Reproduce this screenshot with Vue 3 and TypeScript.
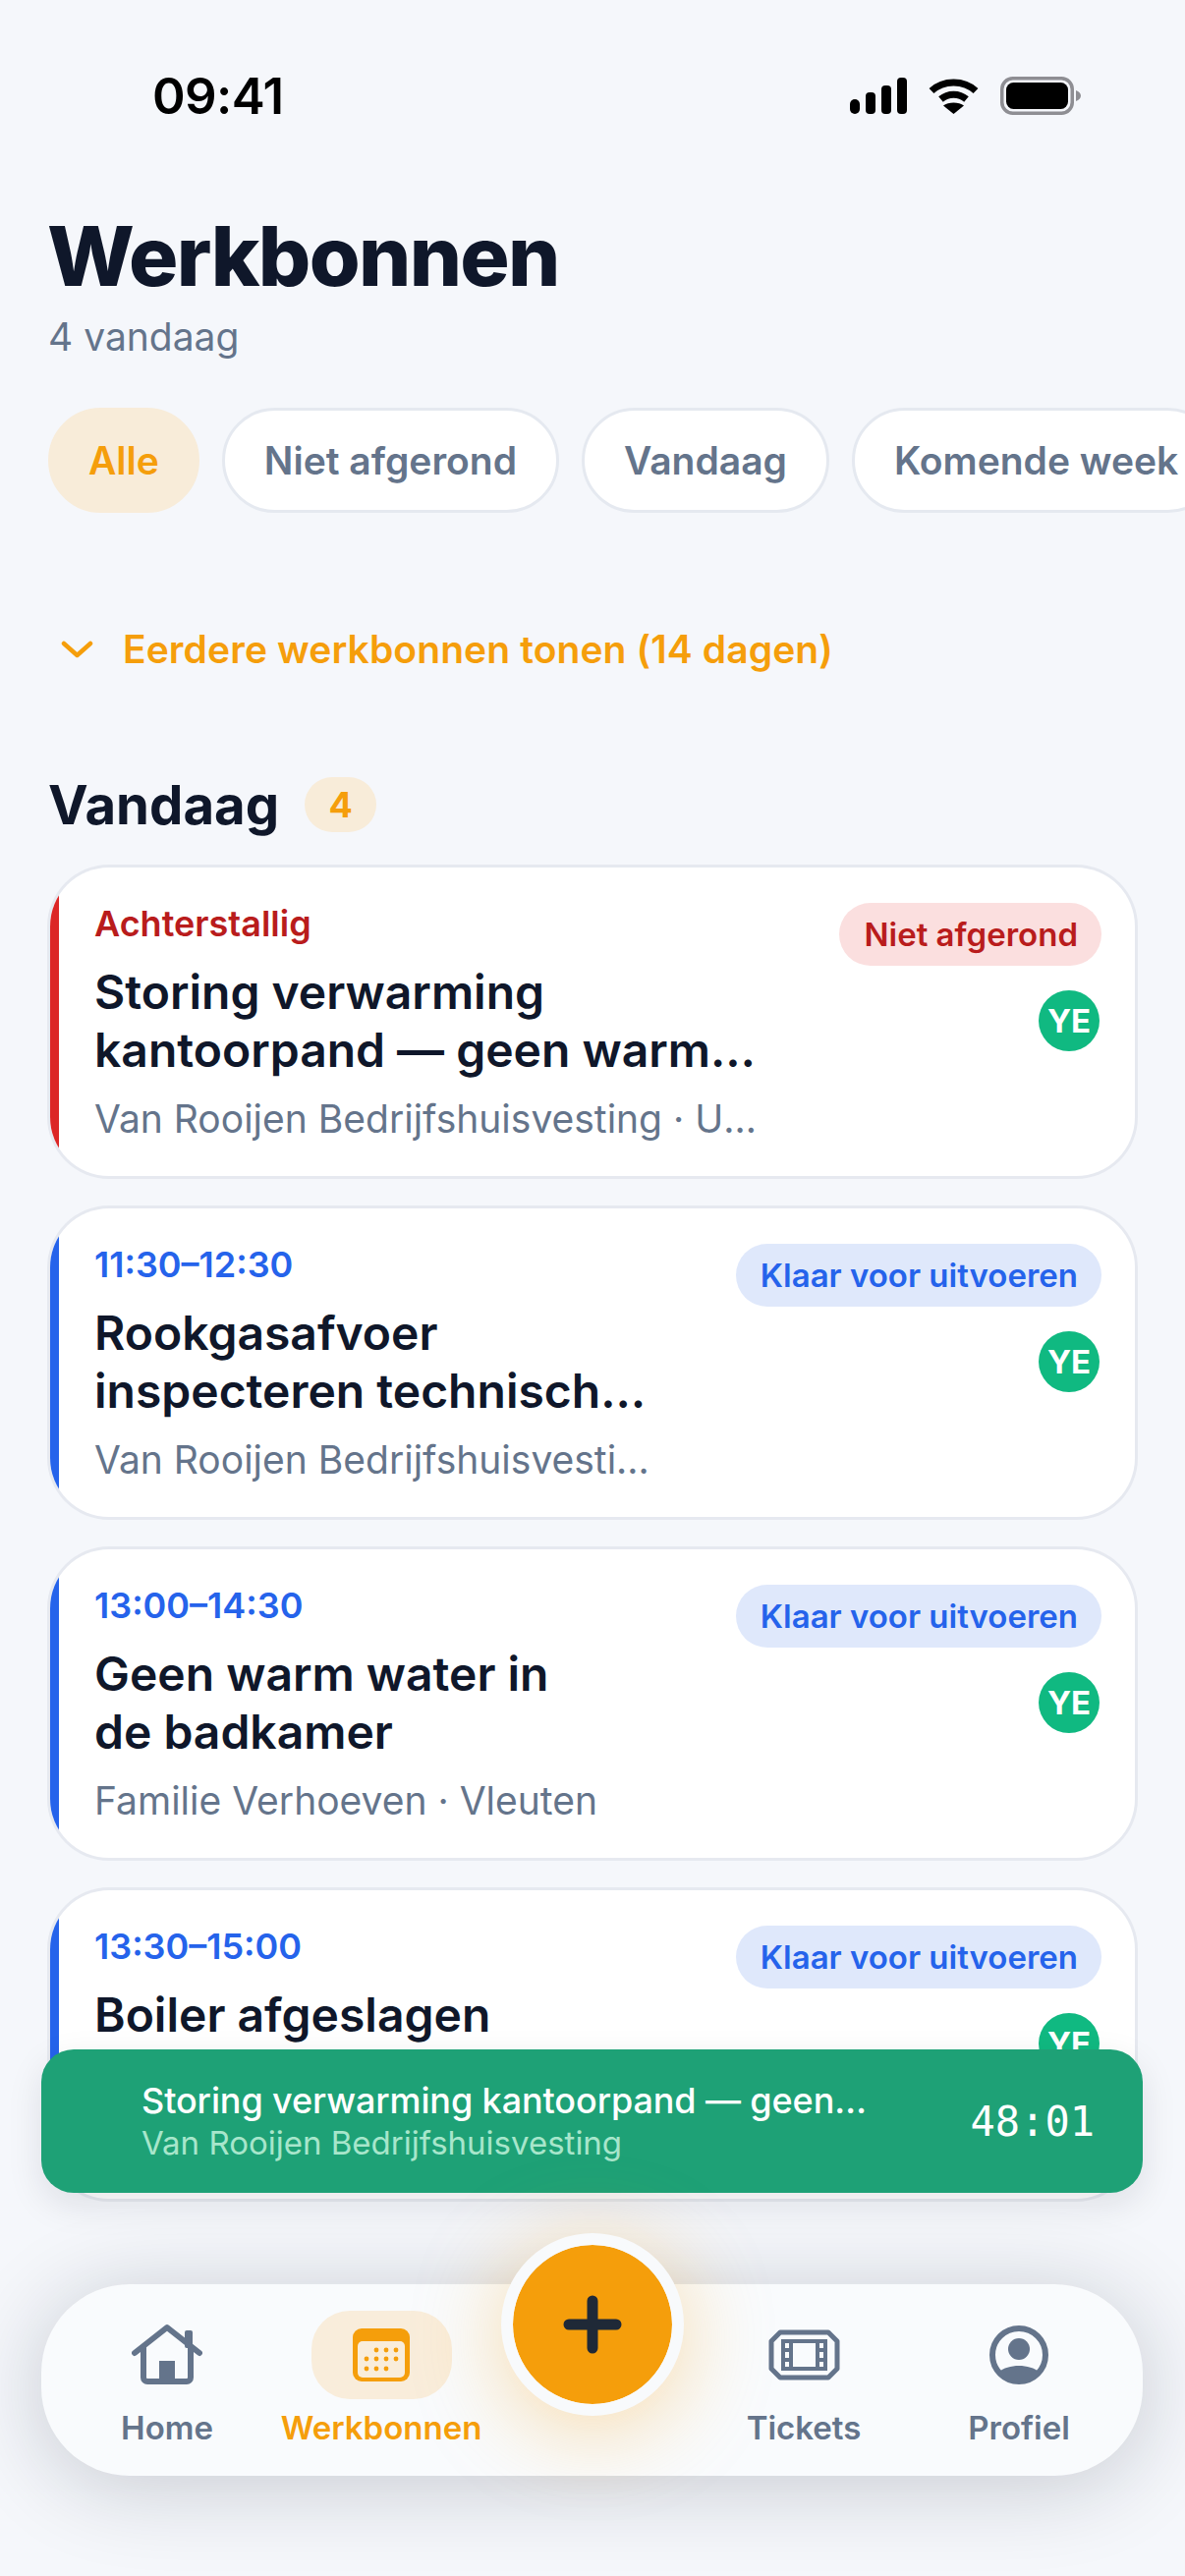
<script setup lang="ts">
interface Order {
  when: string;
  late: boolean;
  status: string;
  title: string;
  meta: string;
}

const filters: string[] = ['Alle', 'Niet afgerond', 'Vandaag', 'Komende week'];

const orders: Order[] = [
  { when: 'Achterstallig', late: true, status: 'Niet afgerond', title: 'Storing verwarming\nkantoorpand — geen warm water', meta: 'Van Rooijen Bedrijfshuisvesting · Utrecht' },
  { when: '11:30–12:30', late: false, status: 'Klaar voor uitvoeren', title: 'Rookgasafvoer\ninspecteren technische ruimte', meta: 'Van Rooijen Bedrijfshuisvesting · Utrecht' },
  { when: '13:00–14:30', late: false, status: 'Klaar voor uitvoeren', title: 'Geen warm water in\nde badkamer', meta: 'Familie Verhoeven · Vleuten' },
  { when: '13:30–15:00', late: false, status: 'Klaar voor uitvoeren', title: 'Boiler afgeslagen', meta: 'Familie Jansen · Utrecht' },
];

const calendarDots: [number, number][] = [
  [24, 22], [34, 22], [44, 22],
  [14, 31], [24, 31], [34, 31], [44, 31],
  [14, 41], [24, 41], [34, 41],
];
</script>

<template>
  <div class="screen">
    <header class="status">
      <span class="clock">09:41</span>
      <div class="status-icons">
        <svg class="signal" width="58" height="37" viewBox="0 0 58 37">
          <rect x="0" y="22" width="10" height="15" rx="5" />
          <rect x="16" y="15" width="10" height="22" rx="4" />
          <rect x="32" y="8" width="10" height="29" rx="4" />
          <rect x="48" y="0" width="10" height="37" rx="4" />
        </svg>
        <svg class="wifi" width="51" height="37" viewBox="0 0 51 37">
          <path d="M3 13.5 C15 2 36 2 48 13.5" fill="none" stroke="#000" stroke-width="7" />
          <path d="M12.5 22 C20 15.5 31 15.5 38.5 22" fill="none" stroke="#000" stroke-width="7" />
          <path d="M25.5 37 L15 28.5 C20 24.5 31 24.5 36 28.5 Z" fill="#000" />
        </svg>
        <svg class="battery" width="82" height="39" viewBox="0 0 82 39">
          <rect x="1.75" y="1.75" width="71.5" height="35.5" rx="11" fill="none" stroke="#8e8e93" stroke-width="3.5" />
          <rect x="6" y="6" width="63" height="27" rx="7.5" fill="#000" />
          <path d="M77 14 C80 15 82 17 82 19.5 C82 22 80 24 77 25 Z" fill="#8e8e93" />
        </svg>
      </div>
    </header>

    <section class="head">
      <h1 class="title">Werkbonnen</h1>
      <p class="subtitle">4 vandaag</p>
    </section>

    <nav class="chips">
      <span v-for="(f, i) in filters" :key="f" class="chip" :class="{ 'chip-on': i === 0 }">{{ f }}</span>
    </nav>

    <div class="earlier">
      <svg width="33" height="18" viewBox="0 0 33 18">
        <path d="M3 3 L16.5 15 L30 3" fill="none" stroke="#f59e0b" stroke-width="4.5" stroke-linecap="round" stroke-linejoin="round" />
      </svg>
      <span>Eerdere werkbonnen tonen (14 dagen)</span>
    </div>

    <div class="section-head">
      <h2>Vandaag</h2>
      <span class="count">4</span>
    </div>

    <div class="list">
      <article v-for="o in orders" :key="o.when" class="card">
        <div class="strip" :class="{ 'strip-late': o.late }"></div>
        <div class="card-body">
          <div class="card-main">
            <div class="when" :class="{ 'when-late': o.late }">{{ o.when }}</div>
            <div class="card-title">{{ o.title }}</div>
            <div class="card-meta">{{ o.meta }}</div>
          </div>
          <div class="card-side">
            <span class="pill" :class="{ 'pill-late': o.late }">{{ o.status }}</span>
            <span class="avatar">YE</span>
          </div>
        </div>
      </article>
    </div>

    <div class="timer">
      <div class="timer-text">
        <div class="timer-title">Storing verwarming kantoorpand — geen warm water</div>
        <div class="timer-sub">Van Rooijen Bedrijfshuisvesting</div>
      </div>
      <span class="timer-time">48:01</span>
    </div>

    <footer class="tabbar">
      <div class="tab">
        <div class="tab-icon">
          <svg width="72" height="64" viewBox="0 0 72 64" fill="none" stroke="#64748b">
            <path d="M3 30 L36 4 L69 30" stroke-width="6" stroke-linecap="round" stroke-linejoin="round" />
            <path d="M12 25 V55 a4 4 0 0 0 4 4 H56 a4 4 0 0 0 4 -4 V25" stroke-width="6" stroke-linecap="round" />
            <rect x="28" y="38" width="16" height="21" fill="#64748b" stroke="none" />
            <rect x="54" y="7" width="8" height="18" rx="2" fill="#64748b" stroke="none" />
          </svg>
        </div>
        <span class="tab-label">Home</span>
      </div>

      <div class="tab tab-on">
        <div class="tab-icon tab-icon-on">
          <svg width="58" height="54" viewBox="0 0 58 54">
            <rect width="58" height="54" rx="9" fill="#f59e0b" />
            <rect x="5" y="13" width="48" height="37" rx="5" fill="#f9eddb" />
            <circle v-for="d in calendarDots" :key="d[0] + '-' + d[1]" :cx="d[0]" :cy="d[1]" r="2.4" fill="#f59e0b" />
          </svg>
        </div>
        <span class="tab-label">Werkbonnen</span>
      </div>

      <div class="tab"></div>

      <div class="tab">
        <div class="tab-icon">
          <svg width="73" height="52" viewBox="0 0 73 52" fill="none" stroke="#64748b">
            <path d="M12 3 H61 L70 12 V40 L61 49 H12 L3 40 V12 Z" stroke-width="5" stroke-linejoin="round" />
            <rect x="15" y="12" width="43" height="28" stroke-width="4" />
            <path d="M23 12 V40 M50 12 V40 M15 21 H23 M15 31 H23 M50 21 H58 M50 31 H58" stroke-width="4" />
          </svg>
        </div>
        <span class="tab-label">Tickets</span>
      </div>

      <div class="tab">
        <div class="tab-icon">
          <svg width="60" height="60" viewBox="0 0 60 60">
            <circle cx="30" cy="30" r="27" fill="none" stroke="#64748b" stroke-width="6" />
            <circle cx="30" cy="24" r="11" fill="#64748b" />
            <path d="M9 48 C14 43 22 41 30 41 C38 41 46 43 51 48 A27 27 0 0 1 9 48 Z" fill="#64748b" />
          </svg>
        </div>
        <span class="tab-label">Profiel</span>
      </div>
    </footer>

    <button class="fab" type="button" aria-label="Nieuw">
      <svg width="60" height="60" viewBox="0 0 60 60">
        <path d="M30 6 V54 M6 30 H54" fill="none" stroke="#1f2937" stroke-width="11" stroke-linecap="round" />
      </svg>
    </button>
  </div>
</template>

<style scoped>
.screen {
  position: relative;
  width: 1206px;
  height: 2622px;
  overflow: hidden;
  background: #f5f7fb;
  font-family: Inter, "Noto Sans", sans-serif;
  color: #0f172a;
}

.status {
  display: flex;
  align-items: center;
  justify-content: space-between;
  height: 39px;
  padding: 78px 106px 0 155px;
}
.clock {
  font-size: 51px;
  font-weight: 600;
  line-height: 39px;
  letter-spacing: -0.6px;
  color: #000;
}
.status-icons {
  display: flex;
  align-items: center;
  gap: 22px;
}
.signal rect {
  fill: #000;
}

.head {
  padding: 94px 48px 0;
}
.title {
  margin: 0;
  font-size: 84px;
  line-height: 100px;
  font-weight: 800;
  letter-spacing: -1.7px;
  color: #0f172a;
}
.subtitle {
  margin: 7px 0 0 1px;
  font-size: 39px;
  line-height: 50px;
  color: #64748b;
}

.chips {
  display: flex;
  gap: 23px;
  padding: 47px 0 0 49px;
  white-space: nowrap;
}
.chip {
  flex: none;
  box-sizing: border-box;
  height: 107px;
  padding: 0 40px;
  display: flex;
  align-items: center;
  border: 3px solid #e5e9f0;
  border-radius: 54px;
  background: #fff;
  font-size: 39px;
  font-weight: 600;
  color: #64748b;
}
.chip-on {
  padding: 0 38px;
  border-color: #f8ecd9;
  background: #f8ecd9;
  color: #f59e0b;
}

.earlier {
  display: flex;
  align-items: center;
  gap: 30px;
  padding: 114px 0 0 62px;
  height: 50px;
  font-size: 39px;
  font-weight: 600;
  line-height: 50px;
  letter-spacing: 0.1px;
  color: #f59e0b;
}

.section-head {
  display: flex;
  align-items: center;
  gap: 26px;
  height: 60px;
  margin-top: 103px;
  padding-left: 49px;
}
.section-head h2 {
  margin: 0;
  font-size: 54.5px;
  line-height: 60px;
  font-weight: 700;
  color: #0f172a;
}
.count {
  width: 73px;
  height: 56px;
  display: flex;
  align-items: center;
  justify-content: center;
  border-radius: 28px;
  background: #f8ecd9;
  color: #f59e0b;
  font-size: 36px;
  font-weight: 700;
}

.list {
  display: flex;
  flex-direction: column;
  gap: 33px;
  margin-top: 34px;
  padding: 0 51px;
}
.card {
  display: flex;
  height: 314px;
  flex: none;
  overflow: hidden;
  border-radius: 60px;
  background: #fff;
  box-shadow: 0 0 0 3px #e6e9f0;
}
.strip {
  flex: none;
  width: 9px;
  background: #2563eb;
}
.strip-late {
  background: #dc2626;
}
.card-body {
  flex: 1;
  min-width: 0;
  display: flex;
  gap: 80px;
  padding: 33px 34px 0 36px;
}
.card-main {
  flex: 1;
  min-width: 0;
}
.when {
  font-size: 36px;
  line-height: 48px;
  font-weight: 600;
  color: #2563eb;
}
.when-late {
  color: #b91c1c;
}
.card-title {
  margin-top: 16px;
  font-size: 48px;
  line-height: 59px;
  font-weight: 600;
  color: #0f172a;
  white-space: pre-line;
  display: -webkit-box;
  -webkit-box-orient: vertical;
  -webkit-line-clamp: 2;
  overflow: hidden;
}
.card-meta {
  margin-top: 17px;
  font-size: 39px;
  line-height: 48px;
  color: #64748b;
  white-space: nowrap;
  overflow: hidden;
  text-overflow: ellipsis;
}
.card-side {
  flex: none;
  display: flex;
  flex-direction: column;
  align-items: flex-end;
  gap: 25px;
  padding-top: 3px;
}
.pill {
  height: 64px;
  padding: 0 24px 0 25px;
  display: flex;
  align-items: center;
  border-radius: 32px;
  background: #dfe8fb;
  color: #2563eb;
  font-size: 33px;
  font-weight: 600;
  white-space: nowrap;
}
.pill-late {
  background: #fbdfdf;
  color: #b91c1c;
}
.avatar {
  width: 62px;
  height: 62px;
  margin-right: 2px;
  display: flex;
  align-items: center;
  justify-content: center;
  border-radius: 50%;
  background: #10b981;
  color: #fff;
  font-size: 33px;
  font-weight: 700;
}

.timer {
  position: absolute;
  left: 42px;
  top: 2086px;
  width: 1121px;
  height: 146px;
  box-sizing: border-box;
  padding: 0 49px 0 102px;
  display: flex;
  align-items: center;
  gap: 100px;
  border-radius: 33px;
  background: #1ea176;
  box-shadow: 0 12px 36px rgba(15, 23, 42, 0.1);
}
.timer-text {
  flex: 1;
  min-width: 0;
}
.timer-title {
  font-size: 36px;
  line-height: 44px;
  font-weight: 500;
  letter-spacing: -0.1px;
  color: #fff;
  white-space: nowrap;
  overflow: hidden;
  text-overflow: ellipsis;
}
.timer-sub {
  font-size: 33px;
  line-height: 42px;
  color: #a7e6cb;
  white-space: nowrap;
}
.timer-time {
  flex: none;
  font-family: "DejaVu Sans Mono", monospace;
  font-size: 42px;
  color: #fff;
}

.tabbar {
  position: absolute;
  left: 42px;
  top: 2325px;
  width: 1121px;
  height: 195px;
  box-sizing: border-box;
  padding: 27px 17px 0 20px;
  display: grid;
  grid-template-columns: 216px 220px 210px 220px 218px;
  border-radius: 90px;
  background: #f9fbfd;
  box-shadow: 0 10px 90px rgba(15, 23, 42, 0.2);
}
.tab {
  display: flex;
  flex-direction: column;
  align-items: center;
  gap: 8px;
  min-width: 0;
}
.tab-icon {
  width: 143px;
  height: 90px;
  display: flex;
  align-items: center;
  justify-content: center;
  border-radius: 39px;
}
.tab-icon-on {
  background: #f9eddb;
}
.tab-label {
  font-size: 33px;
  line-height: 42px;
  font-weight: 600;
  color: #64748b;
  white-space: nowrap;
}
.tab-on .tab-label {
  color: #f59e0b;
}

.fab {
  position: absolute;
  left: 510px;
  top: 2273px;
  width: 186px;
  height: 186px;
  box-sizing: border-box;
  padding: 0;
  display: flex;
  align-items: center;
  justify-content: center;
  border: 12px solid #f8fafc;
  border-radius: 50%;
  background: #f59e0b;
  background-clip: padding-box;
  box-shadow: 0 14px 90px rgba(245, 158, 11, 0.34);
}
</style>

<style>
html,
body {
  margin: 0;
  background: #f5f7fb;
}
</style>
